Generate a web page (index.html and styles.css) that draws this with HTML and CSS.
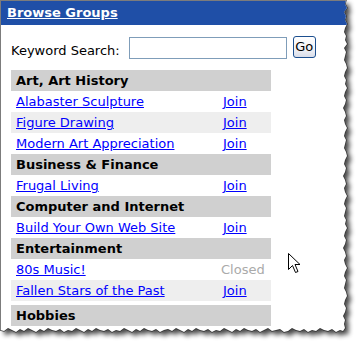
FILE: index.html
```html
<!DOCTYPE html>
<html>
<head>
<meta charset="utf-8">
<title>Browse Groups</title>
<link rel="stylesheet" href="styles.css">
</head>
<body>
<div class="shot">
  <svg class="shadow" width="358" height="341" viewBox="0 0 358 341">
    <defs>
      <filter id="blur" x="-10%" y="-10%" width="120%" height="120%">
        <feGaussianBlur stdDeviation="2.4"/>
      </filter>
      <clipPath id="torn" clipPathUnits="userSpaceOnUse">
        <path id="tornPath" d="M0,0 L346,0 L345,4 L347,8 L344,12 L346,16 L345,20 L347,24 L345,28 L344,32 L346,36 L345,40 L347,44 L344,48 L346,52 L345,56 L344,60 L346,64 L347,68 L345,72 L344,76 L346,80 L345,84 L347,88 L345,92 L344,96 L346,100 L345,104 L343,108 L345,112 L346,116 L344,120 L345,124 L347,128 L345,132 L344,136 L346,140 L345,144 L344,148 L346,152 L347,156 L345,160 L344,164 L346,168 L345,172 L343,176 L345,180 L346,184 L344,188 L345,192 L347,196 L345,200 L344,204 L346,208 L345,212 L344,216 L346,220 L345,224 L347,228 L345,232 L344,236 L346,240 L345,244 L343,248 L345,252 L346,256 L344,260 L345,264 L347,268 L345,272 L344,276 L346,280 L345,284 L344,288 L346,292 L347,296 L345,300 L344,304 L346,308 L345,312 L343,316 L345,320 L344,324 L345,328 L343,331 L340,330 L336,332 L332,329 L328,331 L324,330 L320,328 L316,331 L312,330 L308,332 L304,329 L300,331 L296,330 L292,328 L288,331 L284,332 L280,329 L276,330 L272,331 L268,328 L264,330 L260,332 L256,329 L252,331 L248,330 L244,328 L240,331 L236,329 L232,332 L228,330 L224,328 L220,331 L216,330 L212,332 L208,329 L204,331 L200,330 L196,328 L192,331 L188,329 L184,332 L180,330 L176,328 L172,331 L168,329 L164,330 L160,332 L156,329 L152,331 L148,330 L144,328 L140,331 L136,329 L132,332 L128,330 L124,328 L120,331 L116,330 L112,332 L108,329 L104,331 L100,330 L96,328 L92,331 L88,329 L84,332 L80,330 L76,328 L72,331 L68,330 L64,332 L60,329 L56,331 L52,330 L48,328 L44,331 L40,329 L36,332 L32,330 L28,328 L24,331 L20,329 L16,332 L12,330 L8,328 L4,331 L0,330 Z"/>
      </clipPath>
    </defs>
    <use href="#tornPath" class="shadow-fill" transform="translate(4,4)" filter="url(#blur)"/>
    <use href="#tornPath" class="edge"/>
  </svg>

  <div class="panel">
    <div class="title"><a href="#">Browse Groups</a></div>
    <div class="content">
      <form class="search">
        <label class="search-label" for="kw">Keyword Search:</label>
        <input class="search-input" id="kw" type="text">
        <button class="go" type="button">Go</button>
      </form>

      <div class="groups">
        <div class="group">
          <div class="group-title">Art, Art History</div>
          <div class="item"><a href="#">Alabaster Sculpture</a><a class="join" href="#">Join</a></div>
          <div class="item"><a href="#">Figure Drawing</a><a class="join" href="#">Join</a></div>
          <div class="item"><a href="#">Modern Art Appreciation</a><a class="join" href="#">Join</a></div>
        </div>
        <div class="group">
          <div class="group-title">Business &amp; Finance</div>
          <div class="item"><a href="#">Frugal Living</a><a class="join" href="#">Join</a></div>
        </div>
        <div class="group">
          <div class="group-title">Computer and Internet</div>
          <div class="item"><a href="#">Build Your Own Web Site</a><a class="join" href="#">Join</a></div>
        </div>
        <div class="group">
          <div class="group-title">Entertainment</div>
          <div class="item"><a href="#">80s Music!</a><span class="closed">Closed</span></div>
          <div class="item"><a href="#">Fallen Stars of the Past</a><a class="join" href="#">Join</a></div>
        </div>
        <div class="group group-last">
          <div class="group-title">Hobbies</div>
        </div>
      </div>
    </div>
  </div>

  <svg class="cursor" width="14" height="22" viewBox="0 0 14 22">
    <path d="M0.5,0.5 L0.5,16.5 L4.5,12.5 L7.5,19.5 L10,18.5 L7,11.5 L12,11.5 Z" fill="#fff" stroke="#000" stroke-width="1" stroke-linejoin="miter"/>
  </svg>
</div>
</body>
</html>
```

FILE: styles.css
```css
html, body {
  margin: 0;
  padding: 0;
  background: #ffffff;
}

.shot {
  position: relative;
  width: 358px;
  height: 341px;
  overflow: hidden;
  background: #ffffff;
}

.shadow {
  position: absolute;
  left: 0;
  top: 0;
}

.shadow-fill {
  fill: #000;
  opacity: 0.72;
}

.edge {
  fill: none;
  stroke: #333333;
  stroke-width: 1.4;
}

.panel {
  position: relative;
  box-sizing: border-box;
  width: 350px;
  height: 336px;
  background: #ffffff;
  border-left: 1px solid #7c7c7c;
  border-top: 1px solid #7c7c7c;
  clip-path: url(#torn);
  font-family: "DejaVu Sans", Verdana, sans-serif;
  font-size: 13px;
  color: #000;
}

.title {
  height: 24px;
  line-height: 24px;
  background: #1f4fa7;
  padding-left: 6px;
}

.title a {
  color: #ffffff;
  font-weight: bold;
  text-decoration: underline;
}

.content {
  padding: 11px 0 0 10px;
}

.search {
  display: flex;
  align-items: flex-start;
  height: 22px;
  margin: 0;
}

.search-label {
  line-height: 15px;
  margin-top: 7px;
  margin-right: 9px;
}

.search-input {
  box-sizing: border-box;
  width: 158px;
  height: 22px;
  margin: 1px 0 0 0;
  border: 1px solid #7f9db9;
  padding: 0 2px;
  font: inherit;
  background: #fff;
}

.go {
  box-sizing: border-box;
  width: 23px;
  height: 22px;
  margin-left: 6px;
  padding: 0;
  border: 1px solid #1c4f8f;
  border-radius: 3px;
  background: linear-gradient(#ffffff, #f0f1f6 60%, #d9dde9);
  font-family: "DejaVu Sans", Verdana, sans-serif;
  font-size: 13px;
  color: #000;
  line-height: 18px;
}

.groups {
  width: 260px;
  margin-top: 12px;
}

.group-title {
  height: 21px;
  line-height: 21px;
  background: #d0d0d0;
  padding-left: 5px;
  font-weight: bold;
}

.item {
  display: grid;
  grid-template-columns: 210px 50px;
  height: 21px;
  line-height: 21px;
  background: #ffffff;
}

.item:nth-child(odd) {
  background: #eeeeee;
}

.item a {
  color: #0000ff;
  text-decoration: underline;
}

.item > :first-child {
  padding-left: 5px;
  justify-self: start;
}

.item .join {
  justify-self: start;
  padding-left: 2px;
}

.item .closed {
  color: #aaaaaa;
  justify-self: start;
}

.group-last {
  margin-top: 4px;
}

.cursor {
  position: absolute;
  left: 288px;
  top: 253px;
}
```
